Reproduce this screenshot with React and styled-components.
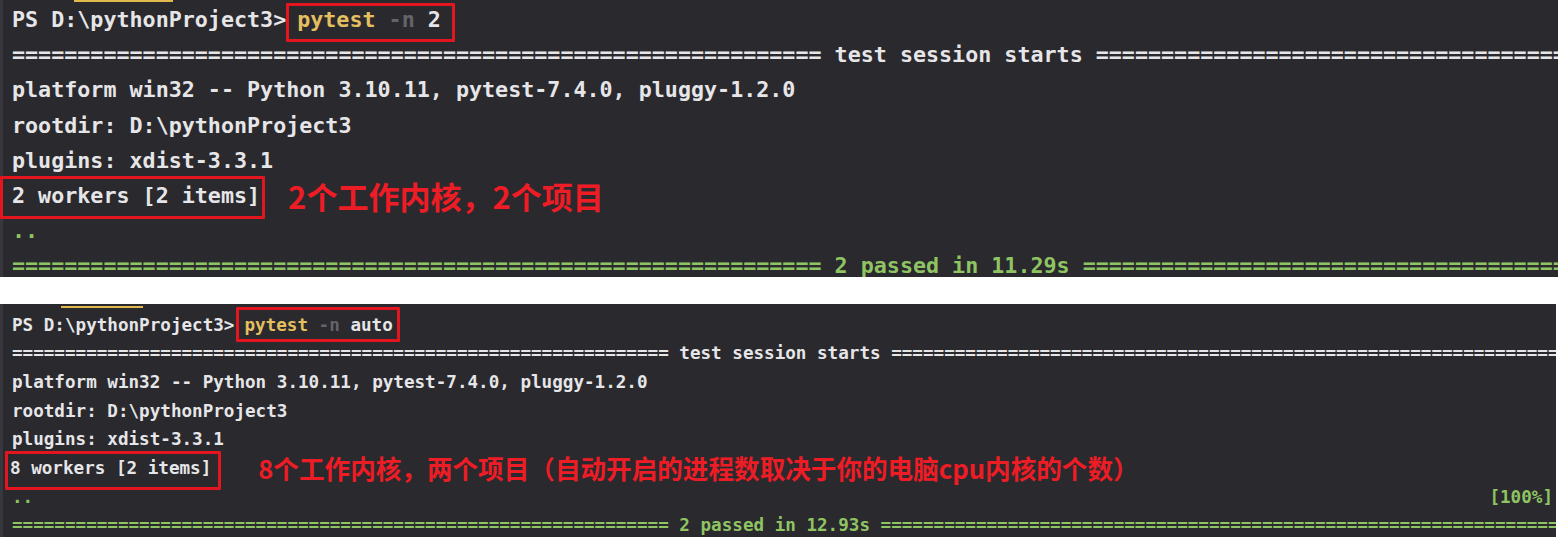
import styled, { createGlobalStyle } from "styled-components"

const Global = createGlobalStyle`
    html, body {
        margin: 0;
        padding: 0;
        background: #ffffff;
    }
`

const SEP = "=".repeat(62)
const TAIL = "=".repeat(90)

export default function App(){
    return(
        <>
        <Global />
        <Page>
            <Terminal $fs={21.7} $lh={35.2} $h={277}>
                <TabMark $x={74} $w={99} $mt={0} $mb={0} />
                <Line>
                    <span>PS D:\pythonProject3&gt;</span>
                    <RedBox $mt={1} $ml={0} $pl={8} $pr={11} $pt={0} $pb={5.8} $lh={27.2}>
                        <Cmd>pytest</Cmd> <Flag>-n</Flag> 2
                    </RedBox>
                </Line>
                <Line>{SEP} test session starts {SEP}{TAIL}</Line>
                <Line>platform win32 -- Python 3.10.11, pytest-7.4.0, pluggy-1.2.0</Line>
                <Line>rootdir: D:\pythonProject3</Line>
                <Line>plugins: xdist-3.3.1</Line>
                <Line>
                    <RedBox $mt={-2} $ml={-12} $pl={9} $pr={2} $pt={0} $pb={3.8} $lh={33.2}>
                        2 workers [2 items]
                    </RedBox>
                    <Note $fs={31} $ml={23}>2个工作内核，2个项目</Note>
                </Line>
                <Line><Green>..</Green></Line>
                <Line><Green>{SEP} 2 passed in 11.29s {SEP}{TAIL}</Green></Line>
            </Terminal>

            <Terminal $fs={17.6} $lh={28.7} $h={233} $narrow>
                <TabMark $x={61} $w={82} $mt={2} $mb={2.65} />
                <Line>
                    <span>PS D:\pythonProject3&gt;</span>
                    <RedBox $mt={-3.6} $ml={2} $pl={5} $pr={4} $pt={1} $pb={0} $lh={28}>
                        <Cmd>pytest</Cmd> <Flag>-n</Flag> auto
                    </RedBox>
                </Line>
                <Line>{SEP} test session starts {SEP}{TAIL}</Line>
                <Line>platform win32 -- Python 3.10.11, pytest-7.4.0, pluggy-1.2.0</Line>
                <Line>rootdir: D:\pythonProject3</Line>
                <Line>plugins: xdist-3.3.1</Line>
                <Line>
                    <RedBox $mt={-3} $ml={-7} $pl={2} $pr={7} $pt={0} $pb={4.3} $lh={28.7}>
                        8 workers [2 items]
                    </RedBox>
                    <Note $fs={25.6} $ml={37}>8个工作内核，两个项目（自动开启的进程数取决于你的电脑cpu内核的个数）</Note>
                </Line>
                <Line $spread>
                    <Green>..</Green>
                    <Green>[100%]</Green>
                </Line>
                <Line><Green>{SEP} 2 passed in 12.93s {SEP}{TAIL}</Green></Line>
            </Terminal>
        </Page>
        </>
    )
}

const Page = styled.div`
    width: 1558px;
    height: 537px;
    display: flex;
    flex-direction: column;
    gap: 27px;
    overflow: hidden;
`
const Terminal = styled.section`
    --lh: ${p => p.$lh}px;
    flex-shrink: 0;
    width: ${p => p.$narrow ? "calc(100% - 2px)" : "100%"};
    height: ${p => p.$h}px;
    box-sizing: border-box;
    padding-left: 12px;
    overflow: hidden;
    background-color: #2a292e;
    box-shadow: inset 3px 0 0 #38373d;
    font-family: "DejaVu Sans Mono", "Liberation Mono", monospace;
    font-weight: bold;
    font-size: ${p => p.$fs}px;
    color: #e6e6e8;
`
const TabMark = styled.div`
    width: ${p => p.$w}px;
    height: 2px;
    margin: ${p => p.$mt}px 0 ${p => p.$mb}px ${p => p.$x - 12}px;
    background-color: #e2b94e;
`
const Line = styled.div`
    display: flex;
    align-items: flex-start;
    justify-content: ${p => p.$spread ? "space-between" : "flex-start"};
    padding-right: ${p => p.$spread ? "3px" : "0"};
    height: var(--lh);
    line-height: var(--lh);
    white-space: pre;
`
const RedBox = styled.span`
    display: inline-block;
    flex-shrink: 0;
    margin-top: ${p => p.$mt}px;
    margin-left: ${p => p.$ml}px;
    padding: ${p => p.$pt}px ${p => p.$pr}px ${p => p.$pb}px ${p => p.$pl}px;
    line-height: ${p => p.$lh}px;
    border: 3px solid #e3161f;
    border-radius: 1px;
`
const Cmd = styled.span`
    color: #e4bf5f;
`
const Flag = styled.span`
    color: #646368;
`
const Green = styled.span`
    color: #8fc463;
`
const Note = styled.span`
    align-self: center;
    margin-left: ${p => p.$ml}px;
    font-family: "Noto Sans CJK SC", "Noto Sans", sans-serif;
    font-weight: bold;
    font-size: ${p => p.$fs}px;
    line-height: var(--lh);
    color: #ee1c25;
`
